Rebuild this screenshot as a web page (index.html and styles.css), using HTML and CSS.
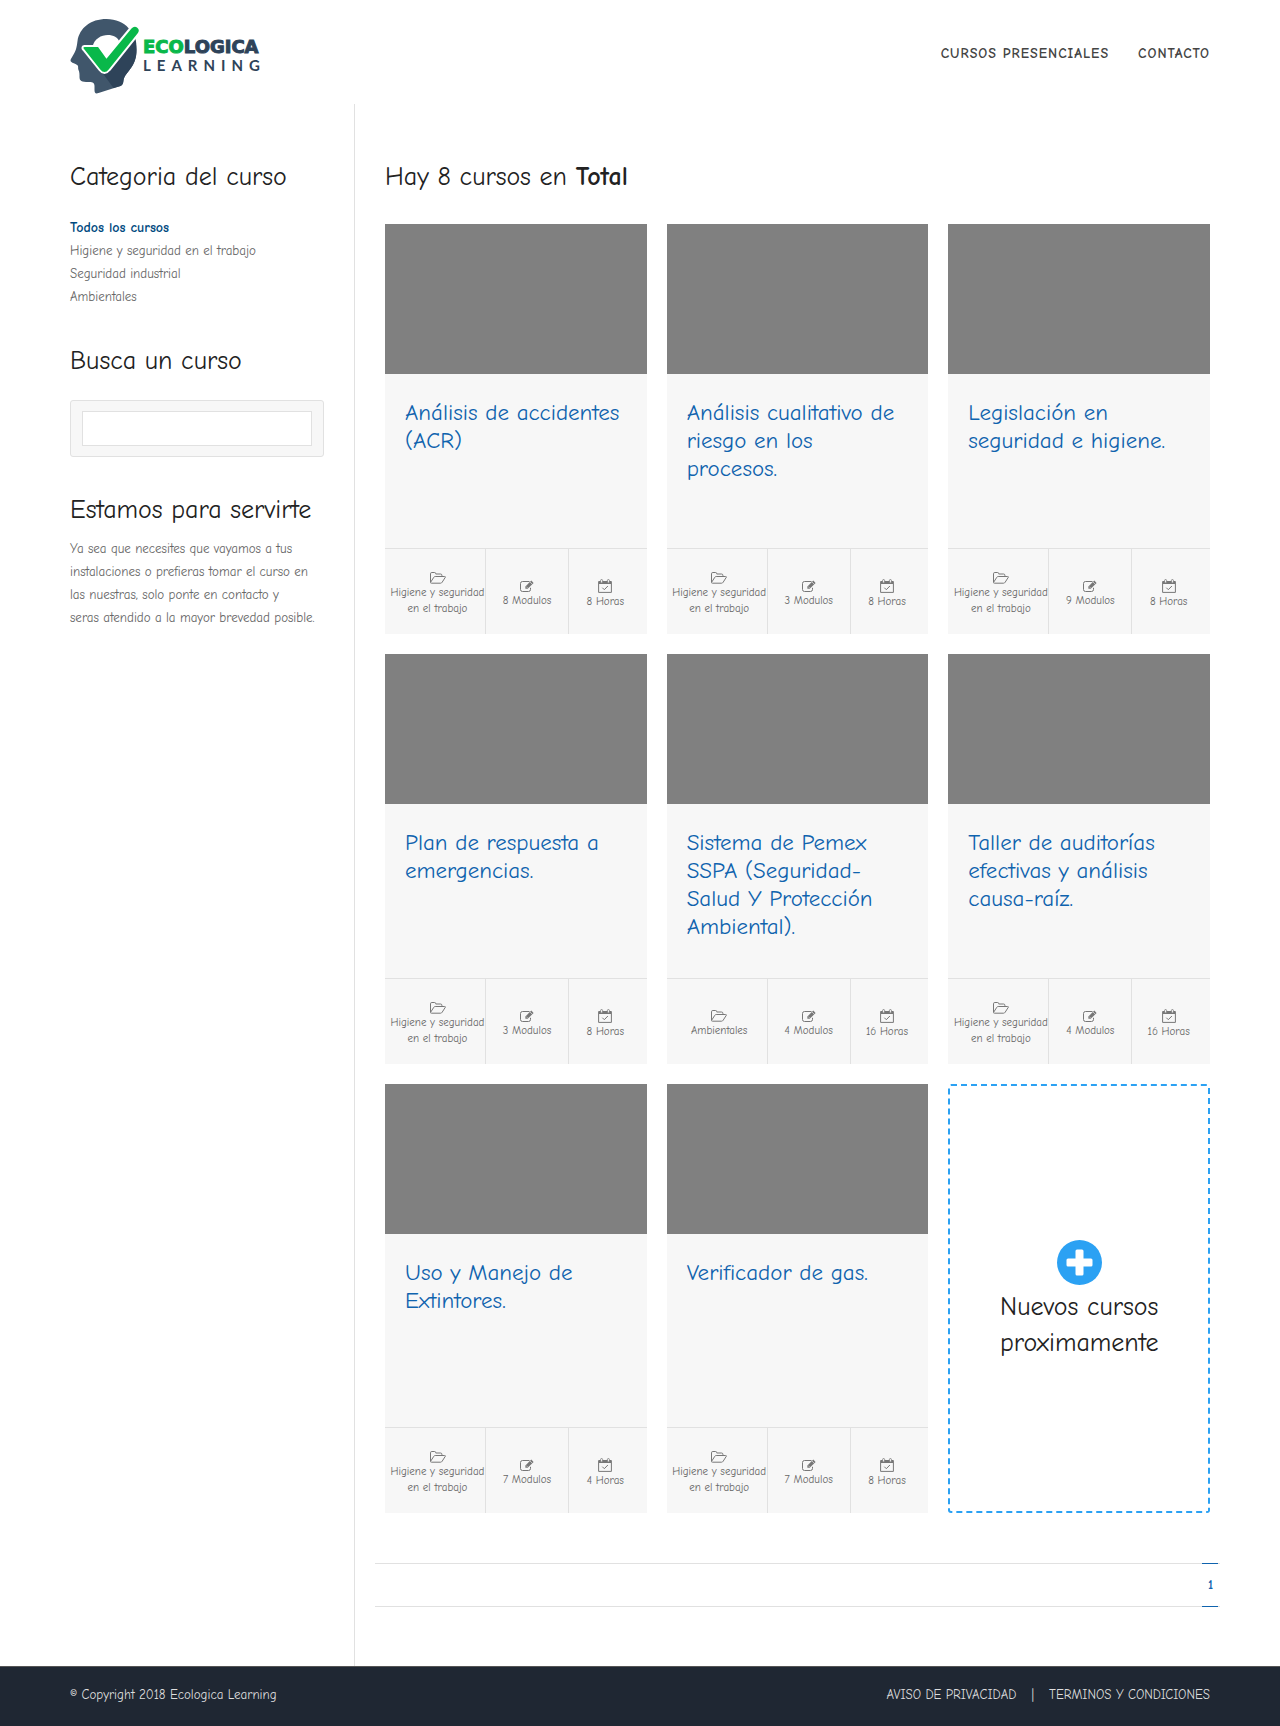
FILE: index.html
```html
<!DOCTYPE html>
<html lang="es">
<head>
<meta charset="utf-8">
<meta name="viewport" content="width=device-width, initial-scale=1">
<title>Ecologica Learning</title>
<link rel="stylesheet" href="styles.css">
</head>
<body>
<svg class="sprite" aria-hidden="true">
  <symbol id="i-folder" viewBox="0 0 16 12"><path d="M.5 10V1.8Q.5.5 1.8.5H4.400Q5.700.5 5.700 1.500V2H10.500Q11.900 2 11.900 3.300V4.500M.6 10.300 3.800 5.300Q4.300 4.500 5.200 4.500H14.600Q15.800 4.500 15.200 5.500L12.100 10.300Q11.500 11.200 10.600 11.200H1.500Q.2 11.200.6 10.300Z" fill="none" stroke="currentColor"/></symbol>
  <symbol id="i-edit" viewBox="0 0 14 12"><path d="M9.500 1.500H2.500Q.5 1.500.5 3.500V9.500Q.5 11.500 2.500 11.500H8.500Q10.500 11.500 10.500 9.500V7.800" fill="none" stroke="currentColor"/><path d="M11.300.6 13.600 2.900 7.700 8.800H5.400V6.500Z" fill="currentColor"/><path d="m10 2 2.300 2.300M6.300 6.600l1.300 1.300" stroke="#f7f7f7" stroke-width=".6"/></symbol>
  <symbol id="i-calendar" viewBox="0 0 14 14"><path d="M1 2H13V5H1Z" fill="currentColor"/><path d="M.6 2.500H13.400V13.400H.6ZM4.300 8.700l2 2 3.600-3.700" fill="none" stroke="currentColor"/><rect x="2.600" y=".5" width="2" height="3.500" rx="1" fill="#f7f7f7" stroke="currentColor" stroke-width=".8"/><rect x="9.400" y=".5" width="2" height="3.500" rx="1" fill="#f7f7f7" stroke="currentColor" stroke-width=".8"/></symbol>
</svg>

<header class="header">
  <div class="container header-row">
    <a class="logo" href="#" aria-label="Ecologica Learning">
      <svg class="logo-mark" viewBox="0 0 68 75" aria-hidden="true">
        <path d="M36 0C55 0 66 14 66 31c0 15-8 20-12 27-2 4 0 7-4 9L28 74c-3 1-4 0-4-3v-4c0-4-3-4-6-4-7 0-9-1-9-5 0-3 0-5-1-7-1-3 1-4-3-6-5-2-6-3-4-6 5-8 5-10 6-17C9 9 20 0 36 0Z" fill="#40566b"/>
        <path d="M62 13C66 20 66 25 66 31c0 15-8 20-12 27-2 4 0 7-4 9l-7 2-11-15Z" fill="#2e4359"/>
        <path d="M22 28C25 13 46 13 49 23L36 38Z" fill="#fff"/>
        <path d="M14 27h14l8 11L60 9c5-5 12 0 8 6L39 51c-3 4-7 4-10 0L13 31c-2-2-1-4 1-4Z" fill="#09b84a" stroke="#fff" stroke-width="2"/>
      </svg>
      <span class="logo-text">
        <span class="logo-name"><span class="logo-eco">ECO</span>LOGICA</span>
        <span class="logo-sub">LEARNING</span>
      </span>
    </a>
    <nav class="nav">
      <a href="#">CURSOS PRESENCIALES</a>
      <a href="#">CONTACTO</a>
    </nav>
  </div>
</header>

<div class="container layout">
  <aside class="sidebar">
    <h2 class="heading">Categoria del curso</h2>
    <ul class="categories">
      <li><a class="current" href="#">Todos los cursos</a></li>
      <li><a href="#">Higiene y seguridad en el trabajo</a></li>
      <li><a href="#">Seguridad industrial</a></li>
      <li><a href="#">Ambientales</a></li>
    </ul>
    <h2 class="heading">Busca un curso</h2>
    <form class="search"><input type="text" aria-label="Busca un curso"></form>
    <h2 class="heading heading-tight">Estamos para servirte</h2>
    <p class="about">Ya sea que necesites que vayamos a tus instalaciones o prefieras tomar el curso en las nuestras, solo ponte en contacto y<br>seras atendido a la mayor brevedad posible.</p>
  </aside>

  <main class="main">
    <h2 class="heading">Hay 8 cursos en <strong>Total</strong></h2>
    <div class="courses">
      <article class="card">
        <div class="card-image"></div>
        <h3 class="card-title"><a href="#">Análisis de accidentes (ACR)</a></h3>
        <div class="stats">
          <div class="stat"><svg class="i-folder"><use href="#i-folder"/></svg><span>Higiene y seguridad en el trabajo</span></div>
          <div class="stat"><svg class="i-edit"><use href="#i-edit"/></svg><span>8 Modulos</span></div>
          <div class="stat"><svg class="i-calendar"><use href="#i-calendar"/></svg><span>8 Horas</span></div>
        </div>
      </article>
      <article class="card">
        <div class="card-image"></div>
        <h3 class="card-title"><a href="#">Análisis cualitativo de riesgo en los procesos.</a></h3>
        <div class="stats">
          <div class="stat"><svg class="i-folder"><use href="#i-folder"/></svg><span>Higiene y seguridad en el trabajo</span></div>
          <div class="stat"><svg class="i-edit"><use href="#i-edit"/></svg><span>3 Modulos</span></div>
          <div class="stat"><svg class="i-calendar"><use href="#i-calendar"/></svg><span>8 Horas</span></div>
        </div>
      </article>
      <article class="card">
        <div class="card-image"></div>
        <h3 class="card-title"><a href="#">Legislación en seguridad e higiene.</a></h3>
        <div class="stats">
          <div class="stat"><svg class="i-folder"><use href="#i-folder"/></svg><span>Higiene y seguridad en el trabajo</span></div>
          <div class="stat"><svg class="i-edit"><use href="#i-edit"/></svg><span>9 Modulos</span></div>
          <div class="stat"><svg class="i-calendar"><use href="#i-calendar"/></svg><span>8 Horas</span></div>
        </div>
      </article>
      <article class="card">
        <div class="card-image"></div>
        <h3 class="card-title"><a href="#">Plan de respuesta a emergencias.</a></h3>
        <div class="stats">
          <div class="stat"><svg class="i-folder"><use href="#i-folder"/></svg><span>Higiene y seguridad en el trabajo</span></div>
          <div class="stat"><svg class="i-edit"><use href="#i-edit"/></svg><span>3 Modulos</span></div>
          <div class="stat"><svg class="i-calendar"><use href="#i-calendar"/></svg><span>8 Horas</span></div>
        </div>
      </article>
      <article class="card">
        <div class="card-image"></div>
        <h3 class="card-title"><a href="#">Sistema de Pemex SSPA (Seguridad-Salud Y Protección Ambiental).</a></h3>
        <div class="stats">
          <div class="stat"><svg class="i-folder"><use href="#i-folder"/></svg><span>Ambientales</span></div>
          <div class="stat"><svg class="i-edit"><use href="#i-edit"/></svg><span>4 Modulos</span></div>
          <div class="stat"><svg class="i-calendar"><use href="#i-calendar"/></svg><span>16 Horas</span></div>
        </div>
      </article>
      <article class="card">
        <div class="card-image"></div>
        <h3 class="card-title"><a href="#">Taller de auditorías efectivas y análisis causa-raíz.</a></h3>
        <div class="stats">
          <div class="stat"><svg class="i-folder"><use href="#i-folder"/></svg><span>Higiene y seguridad en el trabajo</span></div>
          <div class="stat"><svg class="i-edit"><use href="#i-edit"/></svg><span>4 Modulos</span></div>
          <div class="stat"><svg class="i-calendar"><use href="#i-calendar"/></svg><span>16 Horas</span></div>
        </div>
      </article>
      <article class="card">
        <div class="card-image"></div>
        <h3 class="card-title"><a href="#">Uso y Manejo de Extintores.</a></h3>
        <div class="stats">
          <div class="stat"><svg class="i-folder"><use href="#i-folder"/></svg><span>Higiene y seguridad en el trabajo</span></div>
          <div class="stat"><svg class="i-edit"><use href="#i-edit"/></svg><span>7 Modulos</span></div>
          <div class="stat"><svg class="i-calendar"><use href="#i-calendar"/></svg><span>4 Horas</span></div>
        </div>
      </article>
      <article class="card">
        <div class="card-image"></div>
        <h3 class="card-title"><a href="#">Verificador de gas.</a></h3>
        <div class="stats">
          <div class="stat"><svg class="i-folder"><use href="#i-folder"/></svg><span>Higiene y seguridad en el trabajo</span></div>
          <div class="stat"><svg class="i-edit"><use href="#i-edit"/></svg><span>7 Modulos</span></div>
          <div class="stat"><svg class="i-calendar"><use href="#i-calendar"/></svg><span>8 Horas</span></div>
        </div>
      </article>
      <div class="coming">
        <svg class="coming-icon" viewBox="0 0 45 45" aria-hidden="true"><circle cx="22.500" cy="22.500" r="22.500" fill="#2ba1f3"/><rect x="9.500" y="18.500" width="26" height="8" rx="1.500" fill="#fff"/><rect x="18.500" y="9.500" width="8" height="26" rx="1.500" fill="#fff"/></svg>
        <p>Nuevos cursos proximamente</p>
      </div>
    </div>
    <nav class="pagination" aria-label="Paginas"><a href="#" aria-current="page">1</a></nav>
  </main>
</div>

<footer class="footer">
  <div class="container footer-row">
    <span>© Copyright 2018 Ecologica Learning</span>
    <nav class="legal"><a href="#">AVISO DE PRIVACIDAD</a><span>|</span><a href="#">TERMINOS Y CONDICIONES</a></nav>
  </div>
</footer>
</body>
</html>
```
FILE: styles.css
```css
* { box-sizing: border-box; }

body {
  margin: 0;
  background: #fff;
  color: #666;
  font-family: "Comic Neue", "Comic Sans MS", cursive;
  font-size: 13px;
  line-height: 23px;
}

a { color: inherit; text-decoration: none; }
h2, h3, p, ul { margin: 0; padding: 0; font-weight: 400; }
.sprite { display: none; }

.container {
  width: 100%;
  max-width: 1170px;
  margin: 0 auto;
  padding: 0 15px;
}

/* Header */
.header-row { display: flex; justify-content: space-between; height: 104px; }
.logo { display: flex; gap: 4px; padding-top: 19px; }
.logo-mark { width: 69px; height: 75px; overflow: visible; }
.logo-text {
  display: flex;
  flex-direction: column;
  padding-top: 19px;
  color: #2e4359;
  white-space: nowrap;
}
.logo-name { font: 700 18px/18px "DejaVu Sans", sans-serif; -webkit-text-stroke: 1px currentColor; }
.logo-eco { color: #09b84a; }
.logo-sub { font: 700 15px/18px Lato, sans-serif; letter-spacing: 6px; }
.nav {
  display: flex;
  gap: 29px;
  padding-top: 42px;
  color: #444;
  font-size: 14px;
  font-weight: 700;
  letter-spacing: 1px;
}

/* Page columns */
.layout { display: grid; grid-template-columns: 285px minmax(0, 1fr); }
.sidebar { padding: 54px 30px 0 0; border-right: 1px solid #e1e1e1; }
.main { padding: 54px 0 59px 30px; }
.heading { margin-bottom: 28px; color: #222; font-size: 26px; line-height: 38px; }
.sidebar .heading { margin-bottom: 20px; }
.sidebar .heading-tight { margin-bottom: 8px; }
.categories { list-style: none; margin-bottom: 34px; }
.categories .current { color: #004a80; font-size: 14px; font-weight: 700; }
.search {
  margin-bottom: 34px;
  padding: 10px 11px;
  background: #f7f7f7;
  border: 1px solid #e1e1e1;
  border-radius: 3px;
}
.search input {
  display: block;
  width: 100%;
  height: 35px;
  padding: 0 10px;
  border: 1px solid #e1e1e1;
  background: #fff;
  font: inherit;
}

/* Course cards */
.courses { display: grid; grid-template-columns: repeat(3, minmax(0, 1fr)); gap: 20px; }
.card { display: flex; flex-direction: column; min-height: 410px; background: #f7f7f7; }
.card-image { height: 150px; background: #808080; }
.card-title { flex: 1; padding: 25px 20px; color: #0f63ae; font-size: 23px; line-height: 28px; }
.stats { display: grid; grid-template-columns: 100px 83px minmax(0, 1fr); height: 86px; border-top: 1px solid #e1e1e1; }
.stat {
  display: flex;
  flex-direction: column;
  align-items: center;
  justify-content: center;
  gap: 1px;
  padding-top: 5px;
  font-size: 11px;
  line-height: 16px;
  text-align: center;
}
.stat svg { color: #777; }
.stat:first-child { padding-left: 5px; }
.stat:last-child { padding-right: 5px; }
.stat + .stat { border-left: 1px solid #e1e1e1; }
.i-folder { width: 16px; height: 12px; }
.i-edit { width: 14px; height: 12px; }
.i-calendar { width: 14px; height: 14px; }

.coming {
  display: flex;
  flex-direction: column;
  align-items: center;
  justify-content: center;
  min-height: 429px;
  padding: 3px 40px 0;
  border: 2px dashed #2ba1f3;
  border-radius: 3px;
  color: #222;
  font-size: 26px;
  line-height: 36px;
  text-align: center;
}
.coming-icon { width: 45px; height: 45px; margin-bottom: 4px; }

.pagination {
  display: flex;
  justify-content: flex-end;
  margin: 50px -10px 0;
  padding-right: 2px;
  border: solid #e1e1e1;
  border-width: 1px 0;
}
.pagination a {
  margin: -1px 0;
  padding: 9px 5px 9px 6px;
  border: solid #0f63ae;
  border-width: 1px 0;
  color: #0f63ae;
  font-weight: 700;
  line-height: 24px;
}

/* Footer */
.footer { background: #1f2733; border-top: 1px solid #555; color: #ddd; }
.footer-row { display: flex; justify-content: space-between; padding-top: 16px; padding-bottom: 20px; }
.legal { display: flex; gap: 15px; }
```
